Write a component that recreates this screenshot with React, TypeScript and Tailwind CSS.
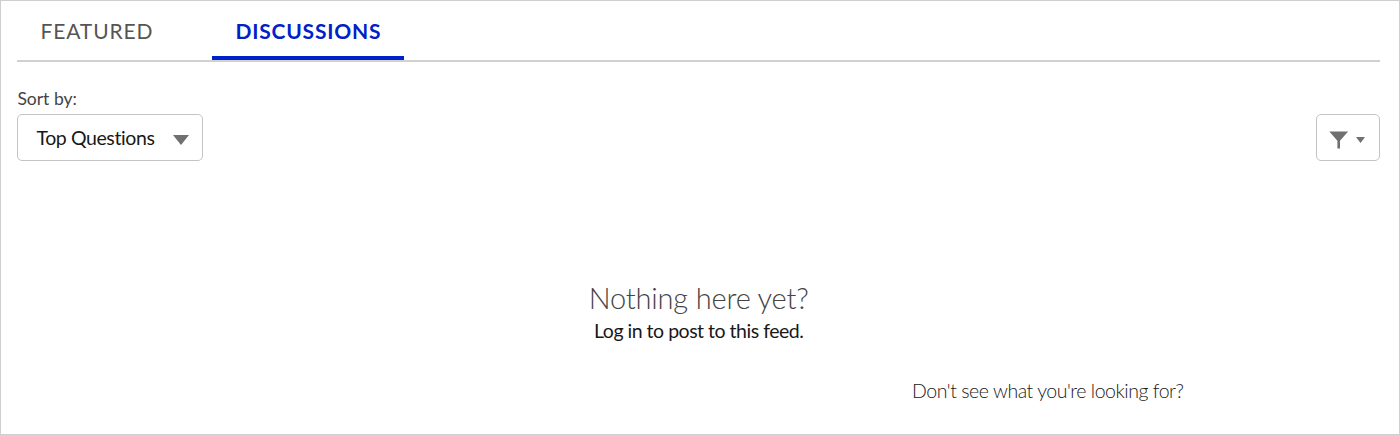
export default function App() {
  return (
    <main className="flex h-[435px] w-full flex-col border border-[#cfcfcf] bg-white pl-[16.4px] pr-[19px] font-['Lato',sans-serif] text-[#181818] [font-variant-ligatures:none]">
      <nav className="flex h-[61px] shrink-0 border-b-2 border-[#d0d0d0] text-[21px] leading-[26px]">
        <button className="flex h-[59px] w-[195px] pl-[23px] pt-[17px] tracking-[0.9px] text-[#555555]">FEATURED</button>
        <button className="flex h-[59px] w-[192px] border-b-4 border-[#0020c8] pl-[23px] pt-[17px] font-bold tracking-[0.8px] text-[#0020c8]">DISCUSSIONS</button>
      </nav>
      <div className="mt-[27px] text-[17.5px] leading-5 text-[#444444]">Sort by:</div>
      <div className="mt-[5px] flex h-[47px] justify-between">
        <button className="flex w-[185.5px] items-center justify-between rounded-[5px] border border-[#c4c4c4] pl-[18px] pr-[13px] text-[19.5px] tracking-[-0.4px]">
          Top Questions
          <svg className="mt-1 h-[10px] w-4 fill-[#707070]" viewBox="0 0 16 10"><path d="M0 0h16L8 10z" /></svg>
        </button>
        <button aria-label="Filter" className="flex w-16 items-center gap-[7px] rounded-[5px] border border-[#c4c4c4] pl-3">
          <svg className="mt-1 h-[18px] w-5 fill-[#707070]" viewBox="0 0 20 18"><path d="M.3.5h18.8L11 9.7v7.8H8.4V9.7z" /></svg>
          <svg className="mt-1 h-[6px] w-[9px] fill-[#707070]" viewBox="0 0 9 6"><path d="M0 0h9L4.5 6z" /></svg>
        </button>
      </div>
      <section className="mt-[119px] flex flex-col items-center">
        <h2 className="text-[29px] font-light leading-9 tracking-[-0.18px] text-[#444444]">Nothing here yet?</h2>
        <p className="mt-px text-[19.5px] leading-7 tracking-[-0.49px]">Log in to post to this feed.</p>
      </section>
      <p className="ml-[894.6px] mt-[34px] text-[19.5px] font-light leading-6 tracking-[-0.45px]">Don't see what you're looking for?</p>
    </main>
  )
}
